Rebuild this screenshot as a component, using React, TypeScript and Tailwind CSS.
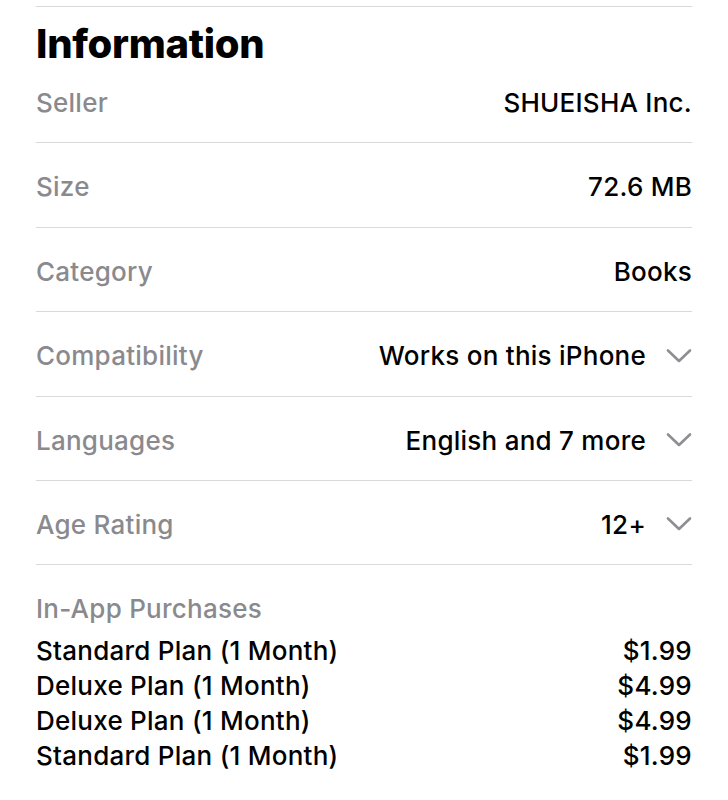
import { ReactNode } from "react";

type InfoRow = {
  label: string;
  value: string;
  expandable?: boolean;
  height: string;
};

// row heights alternate so separators land on the same pixels as the screenshot
const ROWS: InfoRow[] = [
  { label: "Seller", value: "SHUEISHA Inc.", height: "h-[80px]" },
  { label: "Size", value: "72.6 MB", height: "h-[85px] pt-[3px]" },
  { label: "Category", value: "Books", height: "h-[84px] pt-[3px]" },
  { label: "Compatibility", value: "Works on this iPhone", expandable: true, height: "h-[85px] pt-[3px]" },
  { label: "Languages", value: "English and 7 more", expandable: true, height: "h-[84px] pt-[3px]" },
  { label: "Age Rating", value: "12+", expandable: true, height: "h-[84px] pt-[3px]" },
];

const PURCHASES = [
  { name: "Standard Plan (1 Month)", price: "$1.99" },
  { name: "Deluxe Plan (1 Month)", price: "$4.99" },
  { name: "Deluxe Plan (1 Month)", price: "$4.99" },
  { name: "Standard Plan (1 Month)", price: "$1.99" },
];

const Chevron = () => (
  <svg width="26" height="16" viewBox="0 0 26 16" fill="none" className="ml-[20px] shrink-0">
    <path
      d="M2 2.5 L13 13 L24 2.5"
      stroke="#8e8e93"
      strokeWidth="2.6"
      strokeLinecap="round"
      strokeLinejoin="round"
    />
  </svg>
);

const Row = ({ label, height, children }: { label: string; height: string; children: ReactNode }) => (
  <div className={`flex items-center justify-between border-b border-[#d9d9dc] ${height}`}>
    <span className="text-[#8a8a8e]">{label}</span>
    <div className="flex items-center">{children}</div>
  </div>
);

export default function App() {
  return (
    <div
      className="w-[728px] min-h-[800px] bg-white px-[36px] pt-[6px] text-[26px] font-medium tracking-[0.25px] text-black"
      style={{ fontFamily: "Inter, 'Liberation Sans', sans-serif" }}
    >
      <div className="border-t border-[#d9d9dc]" />
      <h1 className="mt-[17px] text-[40px] font-extrabold leading-[40px] tracking-[-0.3px]">
        Information
      </h1>

      <div className="-mt-[1px]">
        {ROWS.map((row) => (
          <Row key={row.label} label={row.label} height={row.height}>
            <span>{row.value}</span>
            {row.expandable && <Chevron />}
          </Row>
        ))}
      </div>

      <div className="pt-[28px]">
        <div className="leading-[32px] text-[#8a8a8e]">In-App Purchases</div>
        <div className="mt-[8px]">
          {PURCHASES.map((p, i) => (
            <div key={i} className="flex justify-between leading-[35px]">
              <span>{p.name}</span>
              <span>{p.price}</span>
            </div>
          ))}
        </div>
      </div>
    </div>
  );
}
